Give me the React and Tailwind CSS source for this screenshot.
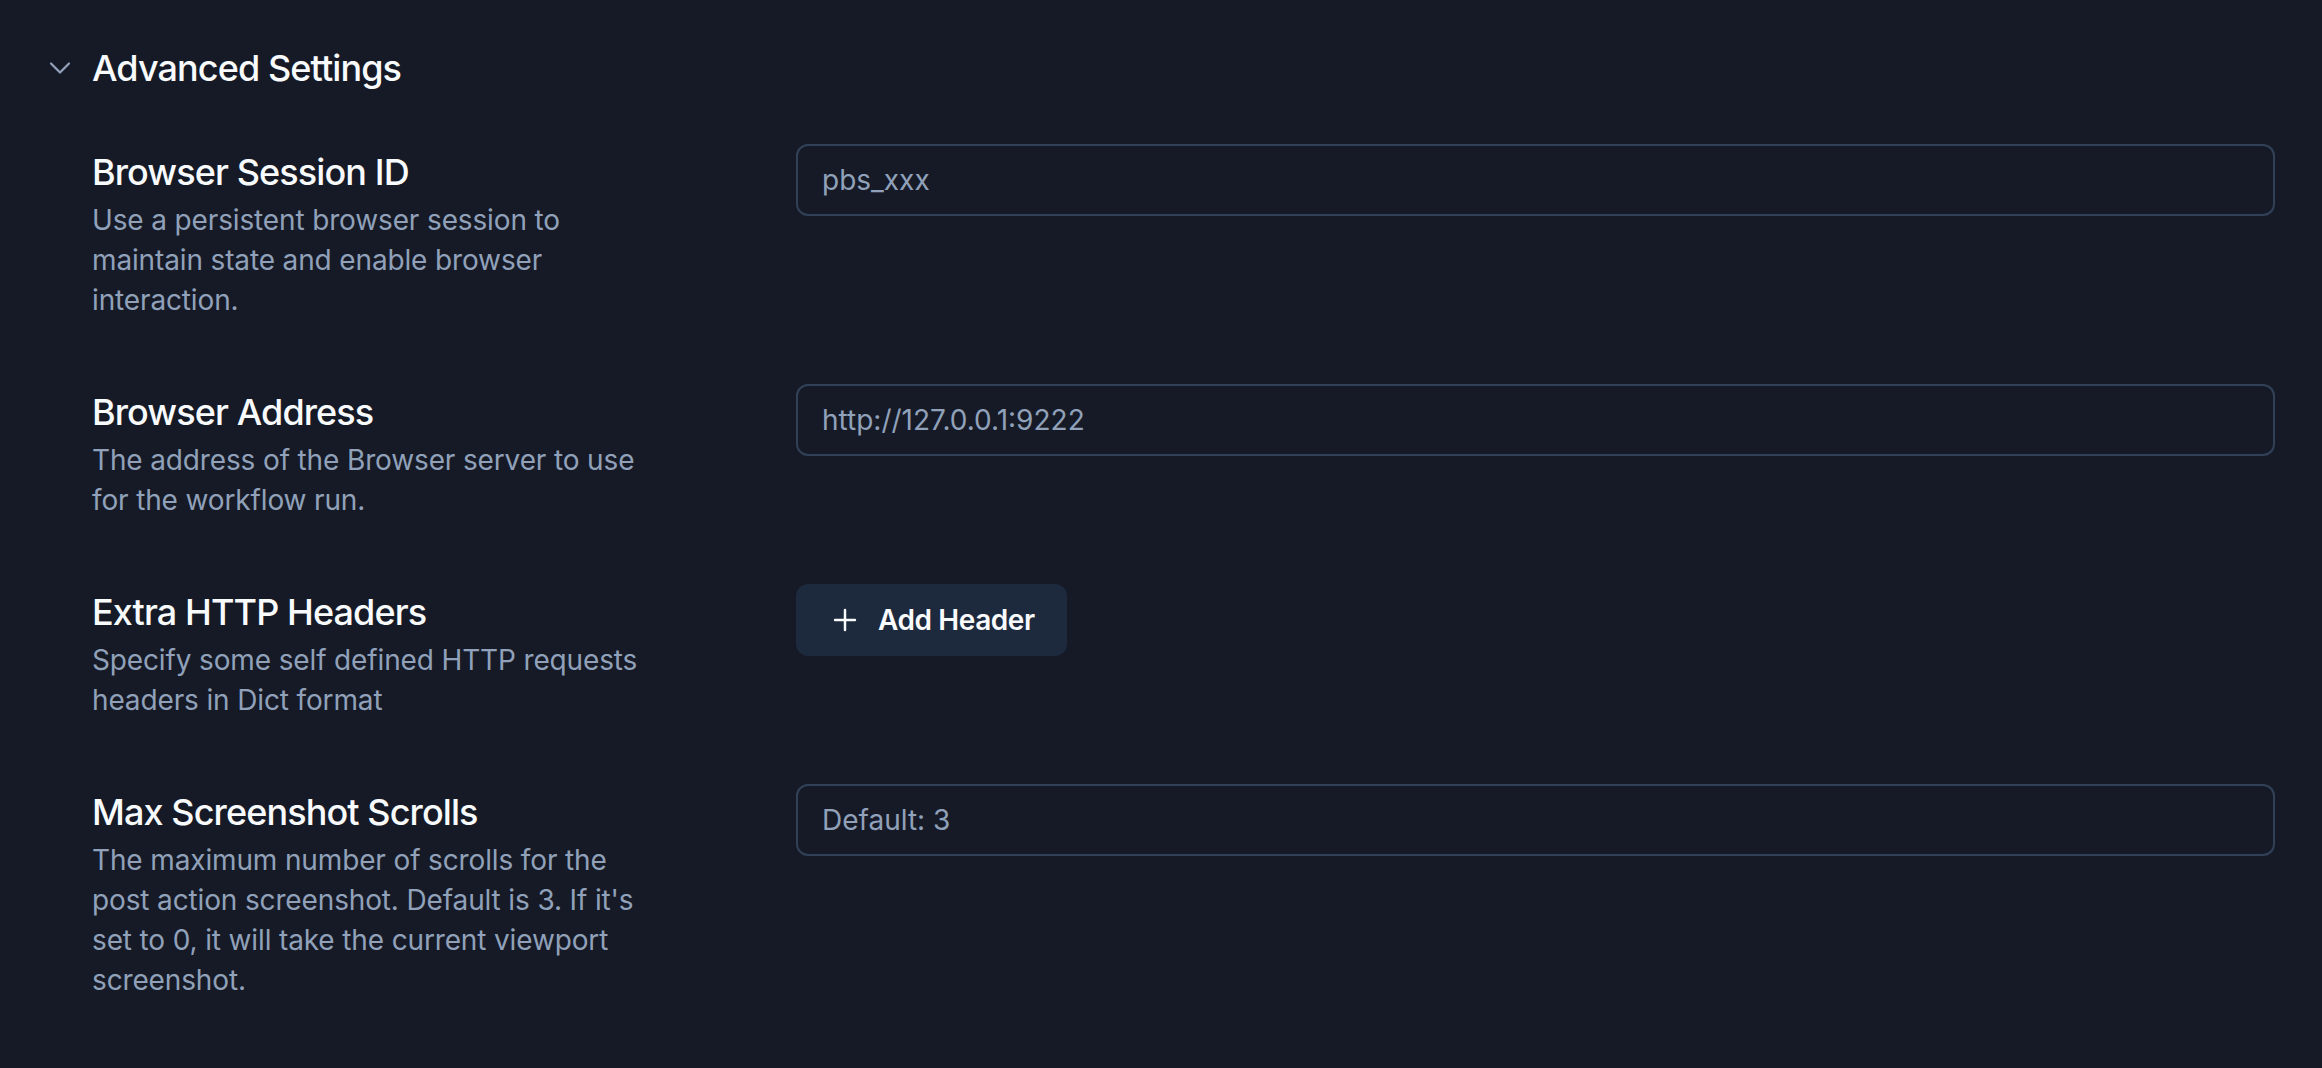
import { ChevronDown, Plus } from "lucide-react";

const fields = [
  {
    id: "browserSessionId",
    title: "Browser Session ID",
    description:
      "Use a persistent browser session to maintain state and enable browser interaction.",
    type: "input",
    placeholder: "pbs_xxx",
  },
  {
    id: "browserAddress",
    title: "Browser Address",
    description:
      "The address of the Browser server to use for the workflow run.",
    type: "input",
    placeholder: "http://127.0.0.1:9222",
  },
  {
    id: "extraHeaders",
    title: "Extra HTTP Headers",
    description:
      "Specify some self defined HTTP requests headers in Dict format",
    type: "button",
  },
  {
    id: "maxScrolls",
    title: "Max Screenshot Scrolls",
    description:
      "The maximum number of scrolls for the post action screenshot. Default is 3. If it's set to 0, it will take the current viewport screenshot.",
    type: "input",
    placeholder: "Default: 3",
  },
];

const App = () => {
  return (
    <div
      className="min-h-screen w-full bg-[#161a27] pl-[42px] pr-[47px] pt-[40px] pb-[60px] antialiased"
      style={{ fontFamily: "Inter, 'Noto Sans', sans-serif" }}
    >
      {/* Section header */}
      <button className="flex items-center gap-[14px] text-left">
        <ChevronDown
          className="h-[36px] w-[36px] text-slate-400"
          strokeWidth={1.5}
        />
        <span className="text-[36px] leading-[56px] font-medium tracking-[-0.025em] text-slate-50">
          Advanced Settings
        </span>
      </button>

      {/* Fields */}
      <div className="mt-[48px] flex flex-col gap-[64px] pl-[50px]">
        {fields.map((field) => (
          <FieldRow key={field.id} field={field} />
        ))}
      </div>
    </div>
  );
};

/* One setting row: label block on the left, control on the right */
const FieldRow = ({ field }) => {
  return (
    <div className="flex gap-[128px]">
      <div className="w-[576px] shrink-0">
        <h3 className="text-[36px] leading-[56px] font-medium tracking-[-0.025em] text-slate-50">
          {field.title}
        </h3>
        <p className="text-[28px] leading-[40px] tracking-[-0.005em] text-slate-400">
          {field.description}
        </p>
      </div>

      <div className="flex-1">
        {field.type === "input" ? (
          <input
            type="text"
            placeholder={field.placeholder}
            className="h-[72px] w-full rounded-[12px] border-2 border-slate-700 bg-transparent px-[24px] text-[28px] text-slate-200 placeholder-slate-400 outline-none"
          />
        ) : (
          <button
            type="button"
            className="flex h-[72px] items-center gap-[16px] rounded-[12px] bg-slate-800 pl-[32px] pr-[32px] text-[28px] font-semibold tracking-[-0.015em] text-slate-50"
          >
            <Plus className="h-[34px] w-[34px]" strokeWidth={1.75} />
            Add Header
          </button>
        )}
      </div>
    </div>
  );
};

export default App;
